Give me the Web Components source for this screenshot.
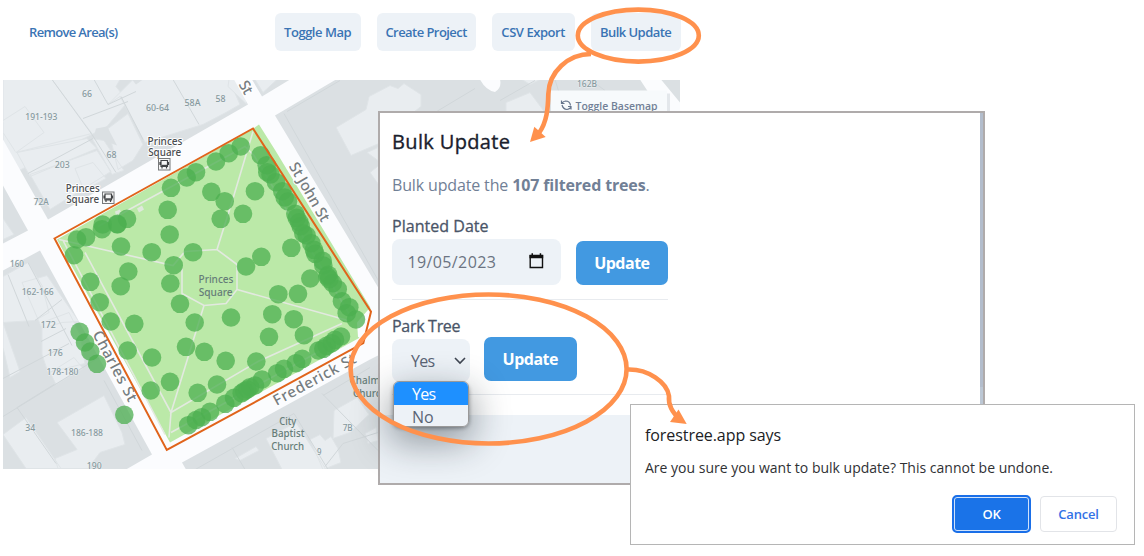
<!DOCTYPE html>
<html lang="en">
<head>
<meta charset="utf-8">
<title>Forestree - Bulk Update</title>
<style>
  body {
    margin: 0;
    background: #fff;
    font-family: "Open Sans", "Noto Sans", sans-serif;
    overflow: hidden;
  }
</style>
</head>
<body>
<tree-page>
  <tree-toolbar slot="toolbar">
    <tool-button plain style="--track: -0.66px">Remove Area(s)</tool-button>
    <tool-button slot="end" style="--width: 86px; --track: -0.48px">Toggle Map</tool-button>
    <tool-button slot="end" style="--width: 99px; --track: -0.56px">Create Project</tool-button>
    <tool-button slot="end" style="--width: 83px; --track: -0.46px">CSV Export</tool-button>
    <tool-button slot="end" style="--width: 90px; --track: -0.54px">Bulk Update</tool-button>
  </tree-toolbar>
  <tree-map slot="map"></tree-map>
  <bulk-panel slot="overlay">
    <update-field label="Planted Date"><date-input value="19/05/2023"></date-input></update-field>
    <update-field label="Park Tree" compact><option-select value="Yes" options="Yes,No"></option-select></update-field>
  </bulk-panel>
  <confirm-dialog slot="overlay" origin="forestree.app">Are you sure you want to bulk update? This cannot be undone.</confirm-dialog>
  <flow-arrows slot="overlay"></flow-arrows>
</tree-page>

<script>
/**
 * Base class: renders styles() and markup() into an open shadow root
 */
class BaseElement extends HTMLElement {
  constructor() {
    super();
    this.attachShadow({ mode: 'open' });
  }

  connectedCallback() {
    this.shadowRoot.innerHTML = `<style>${this.styles()}</style>${this.markup()}`;
  }

  styles() { return ''; }
  markup() { return '<slot></slot>'; }
}

/**
 * Page frame
 */
class TreePage extends BaseElement {
  styles() {
    return `
      :host { display: flex; flex-direction: column; position: relative; width: 1144px; height: 556px; overflow: hidden; }
    `;
  }
  markup() {
    return '<slot name="toolbar"></slot><slot name="map"></slot><slot name="overlay"></slot>';
  }
}

class TreeToolbar extends BaseElement {
  styles() {
    return `
      :host { display: flex; justify-content: space-between; width: 660.6px; height: 66.5px; padding: 13px 0 0 20px; }
      .end { display: flex; gap: 16px; }
    `;
  }
  markup() {
    return '<slot></slot><div class="end"><slot name="end"></slot></div>';
  }
}

class ToolButton extends BaseElement {
  styles() {
    return `
      :host { display: block; }
      button {
        width: var(--width, auto); height: 38px; padding: 0 9px; border: 0; border-radius: 6px;
        background: #edf2f7; color: #3a74b4; white-space: nowrap;
        font: 600 13px/38px "Open Sans", sans-serif; letter-spacing: var(--track, 0);
        display: flex; justify-content: center; align-items: center;
      }
      :host([plain]) button { background: none; }
    `;
  }
  markup() {
    return '<button><slot></slot></button>';
  }
}

/**
 * Map with the selected area and its trees
 */
const TREES = [
  [171,187.3],[186.7,177],[196,171.7],[167.7,209.3],[169.7,234],[127,218.3],[117.3,223.3],[117.3,224],
  [102.7,224],[102,228.7],[86,236.7],[77,239],[74,254.7],[121,246],[151.7,251.7],[193,251.7],[173.7,264.7],[128.3,271],
  [240.7,146],[228.7,152.7],[216,161],[211.3,191.3],[224.7,200.7],[220.7,218.3],[243,213.3],[255,190.7],
  [260.7,154.7],[266.7,164.7],[267.3,171.7],[270.5,174],[276,181.7],[282.3,190.7],[284.7,197],[288,201],
  [295.3,213.3],[296.7,217.3],[299.3,221.7],[300.7,225.7],[303.3,233],[306.7,235],[311.3,242.7],[314,249.3],[315.3,253.3],
  [322.7,260.3],[323.3,265],[328.3,274.3],[291.3,247.3],[261.3,256.3],[246,266],
  [310.3,278],[327.3,276],[329.3,278.7],[332.7,282.7],[337.7,288.7],[342,300.7],[349.3,306.7],[346.7,312.7],[356,319],
  [278.3,293.7],[298,293.3],[272.3,313.7],[293.7,318.7],[304,334.7],[269,336.3],[231,317],[194.7,322],[204.3,351.3],
  [225.7,360.3],[256.3,361],[217,384],[197.7,392.3],[186,346.3],
  [341,336],[335,339.3],[331.7,342.7],[326.7,345.3],[323.3,348.3],[318.3,350],[302.3,358.3],[296,362.7],[284,368.3],
  [277.3,372.7],[262,379],[255,385],[250,386.7],[247.3,389],[244.3,390.7],[241.7,392.7],[234,397.3],[225.3,403.3],
  [210,411.3],[201.7,416.7],[196,419.5],[188.3,424.7],
  [90.3,281.3],[120.7,285.7],[170.3,283],[99.7,301.7],[110.7,321],[134.3,323.3],[180,303.3],
  [79.7,331.3],[85,342],[90.3,351],[97,363.3],[127.7,350],[152,357],[170,381.3],[150.7,390],[124.3,414.3]
];

// text, centre x, baseline, width, kind
const LABELS = [
  ['66',87,96.5,10],['191-193',41.3,119.5,32],['60-64',157.5,110.5,23],['58A',192.5,105.5,16],['58',220.5,101.5,10],
  ['68',111.5,157.5,10],['203',62.3,167.5,15],['72A',41.3,204.5,15],['160',17,266,14],['162-166',37.7,294.5,32],
  ['172',48.3,327,15],['176',55.3,355.5,15],['178-180',62.5,374,32],['34',30.3,430.5,10],['186-188',87,435.5,32],
  ['190',94.3,468,15],['7B',347.7,430.5,10],['9',319.3,454,4.5],['162B',587,86.5,20],
  ['Princes',165,144,35,'stop'],['Square',164.7,155,33,'stop'],['Princes',82.7,191,34,'stop'],['Square',82.7,202,33,'stop'],
  ['Princes',216,282,35,'place'],['Square',215.7,295,34,'place'],
  ['City',287.7,424,17,'place'],['Baptist',288,436.5,33,'place'],['Church',287.7,449,33,'place'],
  ['Chalmers',372,383.5,45,'place'],['Church',370,396,34,'place']
];

class TreeMap extends BaseElement {
  styles() {
    return `
      :host { display: block; width: 677px; height: 389px; margin-left: 3px; }
      svg { display: block; }
      text { font-family: "Noto Sans", sans-serif; text-anchor: middle; font-size: 9.6px; font-weight: 500; fill: #86999e; paint-order: stroke; stroke: #eef1f3; stroke-width: 1px; }
      .stop { font-size: 10px; fill: #4a4d50; stroke: #fff; stroke-width: 2px; }
      .place { font-size: 10.5px; fill: #667d78; stroke-width: 0; }
      .street { font-size: 15px; fill: #767d81; stroke: #fff; stroke-width: 2px; }
      .building { fill: #e9edf0; stroke: #dfe4e7; stroke-width: 1; }
      .lot { fill: none; stroke: #d1d7da; stroke-width: 1; }
      .road { fill: #fbfcfe; }
      .trees { fill: #4caf50; fill-opacity: .75; }
      .path { fill: none; stroke: #e3e9e0; stroke-width: 1.6; }
      .switch { font-family: "Open Sans", sans-serif; font-weight: 600; font-size: 11.5px; fill: #718096; stroke: none; }
    `;
  }

  markup() {
    const trees = TREES.map(([x, y]) => `<circle cx="${x}" cy="${y}" r="9.3"/>`).join('');
    const labels = LABELS.map(([text, x, y, width, kind = '']) =>
      `<text class="${kind}" x="${x}" y="${y}" textLength="${width}" lengthAdjust="spacingAndGlyphs">${text}</text>`).join('');
    const stop = (x, y) => `
      <g transform="translate(${x} ${y})">
        <rect x=".5" y=".5" width="11.5" height="11.5" fill="#f6f6f6" stroke="#77797b"/>
        <path d="M3 2.5h6.5v6H3zM2 4v3M10.5 4v3M4 9v1.5M8.5 9v1.5" fill="none" stroke="#414345" stroke-width="1.2"/>
        <path d="M3.5 6.8h5.5v1.5H3.5z" fill="#414345"/>
      </g>`;

    return `
      <svg width="677" height="389" viewBox="3 79.5 677 389">
        <path fill="#dbe0e3" d="M3 79h677v390H3z"/>

        <!-- north-west block -->
        <path class="building" d="M3 79H120L116 86L128 101L107 126L92 134L3 178V120Z"/>
        <path class="building" d="M3 79H133L108 104L120 96L145 142L203 124L226 112L240 104L229 79Z"/>
        <path class="building" d="M3 79H52L92 133L16 152L3 132Z"/>
        <path class="building" d="M17 152L87 138L97 148L30 176ZM30 174L97 150L111 171L50 209ZM108 128L128 113L143 144L133 160L118 169ZM75 168L93 162L106 178L84 190ZM92 138L104 140L124 170L112 174Z"/>
        <path class="building" d="M3 120L25 106L44 132L16 152"/>
        <path class="lot" d="M52 79L92 134L116 172M83 118L128 101M94 79L108 104L136 91M121 96L143 139M173 79L199 124M28 173L93 138"/>
        <path fill="#dbe0e3" d="M96 128L107 126L117 145L106 141L94 135ZM132 79H143L136 84Z"/>

        <!-- west blocks -->
        <path class="building" d="M3 218L14 234L3 239ZM3 276L28 262L42 285L49 312L35 320L3 322ZM22 282L47 275L79 321L62 322L42 328ZM42 322L69 312L80 334L85 363L48 372L42 354ZM3 322L20 371L10 377L3 347ZM50 372L74 357L83 368L56 384Z"/>
        <path class="building" d="M57 422L104 395L122 432L125 444L100 452L88 468H58L55 458L77 449ZM3 434L26 417L61 468H26Z"/>
        <path class="lot" d="M28 262L72 345M3 378L69 343M8 274L29 326M35 320L62 299M41 341L66 328M54 384L17 407L56 463M3 416L104 354M104 380L142 450"/>

        <!-- north-east block -->
        <path class="building" d="M336 127L366 109L369 96L390 85L398 88L404 83L421 94L421 106L412 113H379V143L351 155Z"/>
        <path class="building" d="M370 172L380 164V186ZM367 152L378 147V160ZM506 102L530 92L545 112H506ZM522 79H540L530 84Z"/>
        <path class="lot" d="M287 111L340 80M284 113L380 283M435 112L475 88M500 100L535 80M560 95L555 79M605 90L590 79"/>
        <path class="building" d="M229 79H243L247 104L228 86ZM255 79H277L263 92Z"/>
        <path class="road" d="M480 79Q486 90 495 91.5Q502 87 500 79ZM640 79H661L680 102V140Z"/>

        <!-- south block -->
        <path class="building" d="M266 438L296 422L326 469H282ZM310 439L320 434L325 440L331 436L338 448L341 462L323 469ZM334 410L357 397L369 414L350 432L333 438ZM235 458L256 446L259 450L240 460ZM365 433L376 427L378 440L368 443Z"/>
        <path class="lot" d="M190 472L294 413L328 469M322 393L378 450M232 447L245 469M323 395L370 367M325 466L343 443L378 432"/>

        <!-- streets -->
        <path class="road" d="M48 219L248 104L234 79H252L262 96L290 79H336L275 115L380 290V354L370 359L182 462L186 469H126L152 454L40 250L3 270V243L28 230L3 185V139Z"/>

        <!-- park -->
        <path fill="#bbe9a8" d="M57 239L252 129L259 124L276 151L371 308L358 325L360 337L170 442Z"/>
        <path fill="#fbfcfe" d="M357 322L371 306L363 341L358 336Z"/>
        <path class="path" d="M59 239L173 265L185 251L217 249L237 264V289L226 303L204 305L182 293V268M217 249L233 198L253 131M237 289L348 320M342 323L258 361L171 412L204 305M171 412L85 252M171 412L169 437M171 432L330 345M63 240L165 434M98 226L245 146L254 155L352 318"/>
        <path fill="#dfe8dc" d="M137 208l5-3 2 4-5 3zM115 211l5-2 1 3-5 3z"/>

        ${labels}
        <text class="street" textLength="66" transform="translate(305 194) rotate(60)">St John St</text>
        <text class="street" textLength="78" transform="translate(110.5 368) rotate(62)">Charles St</text>
        <text class="street" textLength="92" transform="translate(317 383.5) rotate(-28.5)">Frederick St</text>
        <text class="street" textLength="13" transform="translate(241.5 89.5) rotate(60)">St</text>
        ${stop(158, 157.5)}${stop(102, 191)}

        <g class="trees">${trees}</g>
        <path fill="none" stroke="#e0641b" stroke-width="2" d="M54.5 238L253 128L371 311.3L363.3 342.7L166.8 449.5Z"/>

        <!-- basemap switch -->
        <path fill="#b8c0c8" fill-opacity=".35" d="M556 93H670V112H556Z"/>
        <path fill="#f7fafc" d="M551 90H667V112H551Z"/>
        <path fill="none" stroke="#64748b" stroke-width="1.2" d="M562 104.5q1 4 5 4.5q2-.2 3.8-2M570.5 105q-.5-4.5-5-4.5q-2 .2-3.5 2M561.5 100v3h3M571 109v-3h-3"/>
        <text class="switch" x="616.5" y="109" textLength="82" lengthAdjust="spacingAndGlyphs">Toggle Basemap</text>
      </svg>
    `;
  }
}

/**
 * Bulk update panel
 */
class BulkPanel extends BaseElement {
  styles() {
    return `
      :host {
        position: absolute; left: 378px; top: 111px; width: 607px; height: 374px; box-sizing: border-box;
        border: 2px solid #afabab; background: #fff; display: flex;
      }
      .body { flex: 1; display: flex; flex-direction: column; }
      .content { height: 301.5px; padding: 0 12px; display: flex; flex-direction: column; align-items: flex-start; box-sizing: border-box; }
      h2 { margin: 15px 0 0; font-size: 20px; font-weight: 500; line-height: 28px; color: #1a202c; letter-spacing: .36px; -webkit-text-stroke: .35px #1a202c; }
      p { margin: 17px 0; font-size: 16px; line-height: 24px; color: #718096; letter-spacing: -.15px; white-space: nowrap; }
      .footer { flex: 1; background: #edf2f7; }
      .edge { width: 3px; background: linear-gradient(#b3bdcc 0 74%, #bcc7d4 74% 79%, #b0b9c8 79%); }
    `;
  }
  markup() {
    return `
      <div class="body">
        <div class="content">
          <h2>Bulk Update</h2>
          <p>Bulk update the <b>107 filtered trees</b>.</p>
          <slot></slot>
        </div>
        <div class="footer"></div>
      </div>
      <div class="edge"></div>
    `;
  }
}

class UpdateField extends BaseElement {
  styles() {
    return `
      :host { display: block; width: 276px; border-bottom: 1px solid #e8ebef; height: 85px; margin-bottom: 14px; }
      :host([compact]) { height: 80px; margin: 0; }
      label { display: block; font-size: 16px; font-weight: 500; line-height: 24px; color: #4a5568; letter-spacing: .03px; -webkit-text-stroke: .3px #4a5568; }
      :host([compact]) label { letter-spacing: -.3px; }
      .row { display: flex; align-items: flex-end; gap: 14.5px; padding-top: .5px; }
      button {
        width: 92.5px; height: 44px; border: 0; border-radius: 7px; background: #4299e1; color: #fff;
        font: 700 16px "Open Sans", sans-serif; letter-spacing: -.5px; padding: 0;
      }
      :host([compact]) .row { align-items: flex-start; gap: 14px; }
      :host([compact]) button { margin-top: -2px; }
    `;
  }
  markup() {
    return `
      <label>${this.getAttribute('label')}</label>
      <div class="row"><slot></slot><button>Update</button></div>
    `;
  }
}

class DateInput extends BaseElement {
  styles() {
    return `
      :host {
        display: flex; align-items: center; justify-content: space-between; box-sizing: border-box;
        width: 169.5px; height: 46px; padding: 0 17px 0 15.5px; border-radius: 8px; background: #edf2f7;
        font-size: 16px; letter-spacing: .38px; color: #6b7482;
      }
      svg { margin-bottom: 2px; }
    `;
  }
  markup() {
    return `
      <span>${this.getAttribute('value')}</span>
      <svg width="15" height="16" viewBox="0 0 15 16"><path d="M1.2 2.5h12.3v12H1.200z" fill="none" stroke="#111" stroke-width="1.4"/><path d="M.5 2h13.700v3.300H.5zM2.500.300h1.500v2h-1.500zM10.700.300h1.500v2h-1.500z" fill="#111"/></svg>
    `;
  }
}

class OptionSelect extends BaseElement {
  styles() {
    return `
      :host { display: block; position: relative; width: 78px; color: #5a6475; font-size: 16px; letter-spacing: -.7px; }
      .value { display: flex; align-items: center; justify-content: space-between; height: 42px; padding: 1px 4.5px 0 19px; background: #edf2f7; border-radius: 8px; box-sizing: content-box; }
      /* open list lies over the panel footer */
      .list {
        position: absolute; left: 1px; top: 42.5px; width: 76px; height: 46px; box-sizing: border-box;
        border: 1px solid #999; border-radius: 6px; background: #edf2f7; overflow: hidden;
      }
      .shade { position: absolute; left: 1px; top: 44px; width: 76px; height: 44px; border-radius: 7px; box-shadow: 0 12px 36px 4px rgba(20, 30, 40, .42), 0 1px 4px rgba(0, 0, 0, .4); }
      .option { height: 22.500px; line-height: 24px; padding-left: 18px; }
      .option + .option { letter-spacing: 0; }
      .option.selected { background: #1e90ff; color: #fff; }
    `;
  }
  markup() {
    const value = this.getAttribute('value');
    const options = this.getAttribute('options').split(',').map(option =>
      `<div class="option ${option === value ? 'selected' : ''}">${option}</div>`).join('');
    return `
      <div class="value"><span>${value}</span>
        <svg width="12" height="8" viewBox="0 0 12 8"><path d="M1 1l5 5 5-5" fill="none" stroke="#3f4652" stroke-width="1.600"/></svg>
      </div>
      <div class="shade"></div>
      <div class="list">${options}</div>
    `;
  }
}

/**
 * Browser confirm dialog
 */
class ConfirmDialog extends BaseElement {
  styles() {
    return `
      :host {
        position: absolute; left: 630px; top: 404px; width: 505px; height: 141px; box-sizing: border-box;
        border: 1px solid #b5b5b5; background: #fff; padding: 19px 17px 11px 14px;
        display: flex; flex-direction: column; color: #303134;
      }
      h3 { margin: 0; font-size: 16px; font-weight: 400; line-height: 22px; letter-spacing: -.07px; color: #202124; }
      p { margin: 11.5px 0 0; font-size: 14px; line-height: 20px; letter-spacing: .005px; white-space: nowrap; }
      .actions { display: flex; justify-content: flex-end; align-items: center; gap: 9px; margin-top: auto; }
      button { height: 36px; width: 77px; box-sizing: border-box; border: 1px solid #e2e4e8; border-radius: 4px; background: #fff; color: #3272e6; font: 600 13px "Open Sans", sans-serif; padding: 0; letter-spacing: -.2px; }
      .ok { width: 79px; height: 38px; border: 2px solid #1a6fe8; border-radius: 5px; background: #1a73e8; color: #fff; box-shadow: inset 0 0 0 1px #cfe2fb; }
    `;
  }
  markup() {
    return `
      <h3>${this.getAttribute('origin')} says</h3>
      <p><slot></slot></p>
      <div class="actions"><button class="ok">OK</button><button>Cancel</button></div>
    `;
  }
}

/**
 * Rings and arrows that connect the steps
 */
class FlowArrows extends BaseElement {
  styles() {
    return `
      :host { position: absolute; inset: 0; pointer-events: none; }
      .line { fill: none; stroke: #ff914d; stroke-width: 4.6; }
      .head { fill: #ff914d; }
    `;
  }
  markup() {
    return `
      <svg width="1144" height="556">
        <ellipse class="line" cx="638.3" cy="35.6" rx="60.5" ry="26"/>
        <path class="line" d="M591 54C568 54 549 72 548.3 94C548 108 547 122 539 133"/>
        <path class="head" d="M530 142L534.3 126.700L545.700 137Z"/>
        <ellipse class="line" cx="488.600" cy="369" rx="138" ry="74.500"/>
        <path class="line" d="M628 369.500C648 369 667 382 669 396C668 406 673 412 678 418"/>
        <path class="head" d="M686.700 424L678.500 409.500L670 422Z"/>
      </svg>
    `;
  }
}

// Define custom elements
customElements.define('tree-page', TreePage);
customElements.define('tree-toolbar', TreeToolbar);
customElements.define('tool-button', ToolButton);
customElements.define('tree-map', TreeMap);
customElements.define('bulk-panel', BulkPanel);
customElements.define('update-field', UpdateField);
customElements.define('date-input', DateInput);
customElements.define('option-select', OptionSelect);
customElements.define('confirm-dialog', ConfirmDialog);
customElements.define('flow-arrows', FlowArrows);
</script>
</body>
</html>
